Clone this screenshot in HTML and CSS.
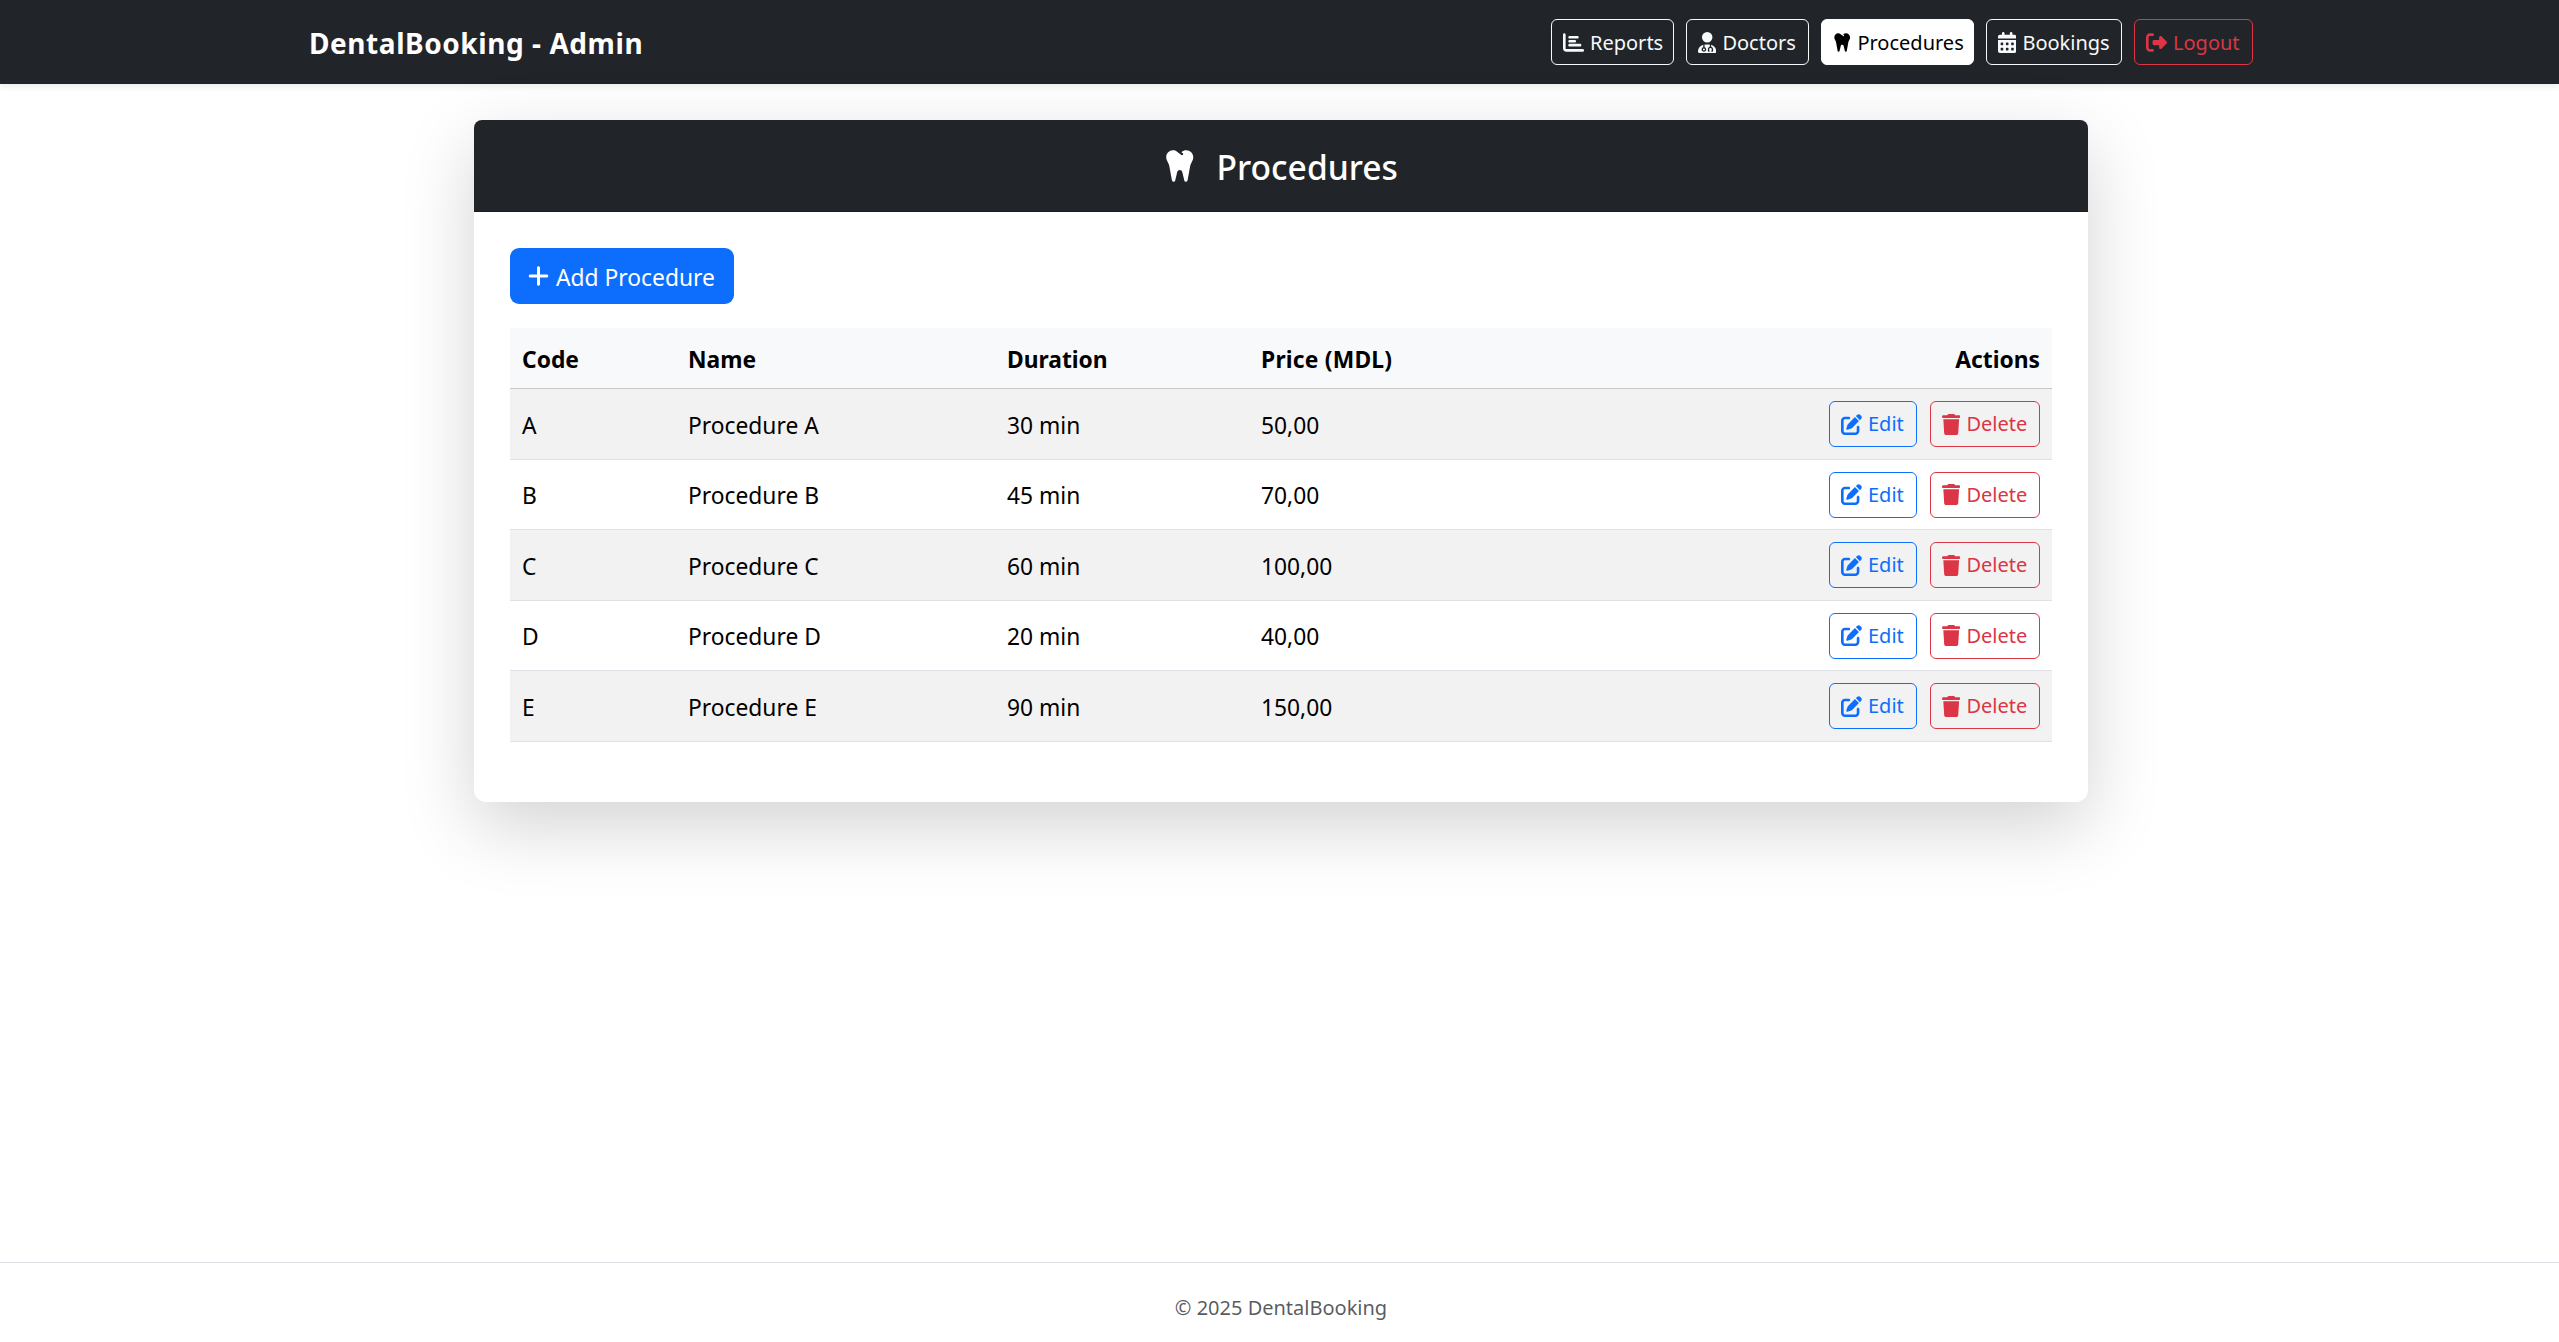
FILE: index.html
```html
<!DOCTYPE html>
<html lang="en">
<head>
<meta charset="utf-8">
<title>DentalBooking - Admin</title>
<link rel="stylesheet" href="styles.css">
</head>
<body>
<svg class="sprite" aria-hidden="true">
  <symbol id="chart" viewBox="0 0 512 512"><path d="M32 32c17.700 0 32 14.300 32 32V400c0 8.800 7.200 16 16 16H480c17.700 0 32 14.300 32 32s-14.300 32-32 32H80c-44.200 0-80-35.800-80-80V64C0 46.300 14.300 32 32 32zm96 96c0-17.700 14.300-32 32-32l192 0c17.700 0 32 14.300 32 32s-14.300 32-32 32l-192 0c-17.700 0-32-14.300-32-32zm32 64l128 0c17.700 0 32 14.300 32 32s-14.300 32-32 32l-128 0c-17.700 0-32-14.300-32-32s14.300-32 32-32zm0 96l256 0c17.700 0 32 14.300 32 32s-14.300 32-32 32l-256 0c-17.700 0-32-14.300-32-32s14.300-32 32-32z"/></symbol>
  <symbol id="doctor" viewBox="0 0 448 512"><path d="M224 256a128 128 0 1 0 0-256 128 128 0 1 0 0 256zm-96 55.200C54 332.900 0 401.300 0 482.300C0 498.700 13.300 512 29.700 512H418.300c16.400 0 29.700-13.300 29.700-29.700c0-81-54-149.400-128-171.100V362c27.600 7.100 48 32.200 48 62v40c0 8.800-7.200 16-16 16H336c-8.800 0-16-7.200-16-16s7.200-16 16-16V424c0-17.700-14.300-32-32-32s-32 14.300-32 32v24c8.800 0 16 7.200 16 16s-7.200 16-16 16H256c-8.800 0-16-7.200-16-16V424c0-29.800 20.400-54.900 48-62V304.900c-6-.6-12.100-.9-18.300-.9H178.300c-6.200 0-12.300 .3-18.300 .9v65.400c23.100 6.900 40 28.300 40 53.700c0 30.900-25.100 56-56 56s-56-25.100-56-56c0-25.400 16.900-46.800 40-53.700V311.200zM144 448a24 24 0 1 0 0-48 24 24 0 1 0 0 48z"/></symbol>
  <symbol id="tooth" viewBox="0 0 448 512"><path d="M186.100 52.100C169.300 39.100 148.700 32 127.500 32C74.700 32 32 74.700 32 127.500v6.200c0 15.800 3.700 31.300 10.700 45.500l23.500 47.100c4.500 8.900 7.600 18.400 9.400 28.200l36.700 205.800c2 11.200 11.600 19.400 22.900 19.800s21.400-7.400 24-18.400l28.900-121.300C192.200 323.700 207 312 224 312s31.800 11.700 35.800 28.300l28.900 121.300c2.600 11.100 12.700 18.800 24 18.400s21-8.600 22.900-19.800l36.700-205.800c1.800-9.800 4.900-19.300 9.400-28.200l23.500-47.100c7.100-14.100 10.700-29.700 10.700-45.500v-2.100c0-55-44.600-99.600-99.600-99.600c-24.100 0-47.400 8.800-65.600 24.600l-3.200 2.800 19.500 15.200c7 5.400 8.200 15.500 2.800 22.500s-15.500 8.200-22.500 2.800l-24.400-19-37-28.800z"/></symbol>
  <symbol id="calendar" viewBox="0 0 448 512"><path d="M128 0c17.700 0 32 14.300 32 32V64H288V32c0-17.700 14.300-32 32-32s32 14.300 32 32V64h48c26.500 0 48 21.500 48 48v48H0V112C0 85.500 21.500 64 48 64H96V32c0-17.700 14.300-32 32-32zM0 192H448V464c0 26.500-21.500 48-48 48H48c-26.500 0-48-21.500-48-48V192zm64 80v32c0 8.800 7.200 16 16 16h32c8.800 0 16-7.200 16-16V272c0-8.800-7.200-16-16-16H80c-8.800 0-16 7.200-16 16zm128 0v32c0 8.800 7.200 16 16 16h32c8.800 0 16-7.200 16-16V272c0-8.800-7.200-16-16-16H208c-8.800 0-16 7.200-16 16zm144-16c-8.800 0-16 7.200-16 16v32c0 8.800 7.200 16 16 16h32c8.800 0 16-7.200 16-16V272c0-8.800-7.200-16-16-16H336zM64 400v32c0 8.800 7.200 16 16 16h32c8.800 0 16-7.200 16-16V400c0-8.800-7.200-16-16-16H80c-8.800 0-16 7.200-16 16zm144-16c-8.800 0-16 7.200-16 16v32c0 8.800 7.200 16 16 16h32c8.800 0 16-7.200 16-16V400c0-8.800-7.200-16-16-16H208zm112 16v32c0 8.800 7.200 16 16 16h32c8.800 0 16-7.200 16-16V400c0-8.800-7.200-16-16-16H336c-8.800 0-16 7.200-16 16z"/></symbol>
  <symbol id="logout" viewBox="0 0 512 512"><path d="M377.900 105.900L500.700 228.700c7.200 7.200 11.300 17.100 11.300 27.300s-4.100 20.100-11.300 27.300L377.900 406.100c-6.400 6.400-15 9.900-24 9.900c-18.700 0-33.900-15.200-33.900-33.900l0-62.100-128 0c-17.700 0-32-14.300-32-32l0-64c0-17.700 14.300-32 32-32l128 0 0-62.100c0-18.700 15.200-33.900 33.900-33.900c9 0 17.600 3.600 24 9.900zM160 96L96 96c-17.700 0-32 14.300-32 32l0 256c0 17.700 14.300 32 32 32l64 0c17.700 0 32 14.300 32 32s-14.300 32-32 32l-64 0c-53 0-96-43-96-96L0 128C0 75 43 32 96 32l64 0c17.700 0 32 14.300 32 32s-14.300 32-32 32z"/></symbol>
  <symbol id="plus" viewBox="0 0 448 512"><path d="M256 80c0-17.700-14.300-32-32-32s-32 14.300-32 32V224H48c-17.700 0-32 14.300-32 32s14.300 32 32 32H192V432c0 17.700 14.300 32 32 32s32-14.300 32-32V288H400c17.700 0 32-14.300 32-32s-14.300-32-32-32H256V80z"/></symbol>
  <symbol id="edit" viewBox="0 0 512 512"><path d="M471.600 21.700c-21.900-21.900-57.300-21.900-79.200 0L362.300 51.700l97.900 97.900 30.100-30.100c21.900-21.900 21.900-57.300 0-79.200L471.600 21.700zm-299.200 220c-6.100 6.100-10.800 13.600-13.500 21.900l-29.600 88.800c-2.900 8.600-.6 18.100 5.800 24.600s15.900 8.700 24.600 5.800l88.800-29.600c8.200-2.700 15.700-7.400 21.900-13.500L437.700 172.300 339.700 74.300 172.400 241.700zM96 64C43 64 0 107 0 160V416c0 53 43 96 96 96H352c53 0 96-43 96-96V320c0-17.700-14.300-32-32-32s-32 14.300-32 32v96c0 17.700-14.300 32-32 32H96c-17.700 0-32-14.300-32-32V160c0-17.700 14.300-32 32-32h96c17.700 0 32-14.300 32-32s-14.300-32-32-32H96z"/></symbol>
  <symbol id="trash" viewBox="0 0 448 512"><path d="M135.200 17.700L128 32H32C14.300 32 0 46.300 0 64S14.300 96 32 96H416c17.700 0 32-14.300 32-32s-14.300-32-32-32H320l-7.200-14.300C307.400 6.800 296.300 0 284.200 0H163.800c-12.100 0-23.200 6.800-28.600 17.700zM416 128H32L53.200 467c1.600 25.300 22.600 45 47.900 45H346.900c25.300 0 46.300-19.700 47.900-45L416 128z"/></symbol>
</svg>
<header class="navbar">
  <div class="navbar-inner">
    <a class="brand">DentalBooking - Admin</a>
    <nav class="nav">
      <a class="btn light reports"><svg class="icon wide"><use href="#chart"/></svg><span>Reports</span></a>
      <a class="btn light doctors"><svg class="icon"><use href="#doctor"/></svg><span>Doctors</span></a>
      <a class="btn light active procedures"><svg class="icon"><use href="#tooth"/></svg><span>Procedures</span></a>
      <a class="btn light bookings"><svg class="icon"><use href="#calendar"/></svg><span>Bookings</span></a>
      <a class="btn danger logout"><svg class="icon wide"><use href="#logout"/></svg><span>Logout</span></a>
    </nav>
  </div>
</header>
<main class="main">
  <section class="card">
    <div class="card-header"><svg class="icon"><use href="#tooth"/></svg><h1 class="title">Procedures</h1></div>
    <div class="card-body">
      <a class="btn primary"><svg class="icon"><use href="#plus"/></svg><span>Add Procedure</span></a>
      <table class="table">
        <colgroup><col class="col-code"><col class="col-name"><col class="col-duration"><col class="col-price"><col></colgroup>
        <thead><tr><th>Code</th><th>Name</th><th>Duration</th><th class="price">Price (MDL)</th><th class="end">Actions</th></tr></thead>
        <tbody>
          <tr><td>A</td><td>Procedure A</td><td>30 min</td><td>50,00</td><td class="cell-actions"><div class="actions"><a class="btn edit"><svg class="icon wide"><use href="#edit"/></svg><span>Edit</span></a><a class="btn danger delete"><svg class="icon"><use href="#trash"/></svg><span>Delete</span></a></div></td></tr>
          <tr><td>B</td><td>Procedure B</td><td>45 min</td><td>70,00</td><td class="cell-actions"><div class="actions"><a class="btn edit"><svg class="icon wide"><use href="#edit"/></svg><span>Edit</span></a><a class="btn danger delete"><svg class="icon"><use href="#trash"/></svg><span>Delete</span></a></div></td></tr>
          <tr><td>C</td><td>Procedure C</td><td>60 min</td><td>100,00</td><td class="cell-actions"><div class="actions"><a class="btn edit"><svg class="icon wide"><use href="#edit"/></svg><span>Edit</span></a><a class="btn danger delete"><svg class="icon"><use href="#trash"/></svg><span>Delete</span></a></div></td></tr>
          <tr><td>D</td><td>Procedure D</td><td>20 min</td><td>40,00</td><td class="cell-actions"><div class="actions"><a class="btn edit"><svg class="icon wide"><use href="#edit"/></svg><span>Edit</span></a><a class="btn danger delete"><svg class="icon"><use href="#trash"/></svg><span>Delete</span></a></div></td></tr>
          <tr><td>E</td><td>Procedure E</td><td>90 min</td><td>150,00</td><td class="cell-actions"><div class="actions"><a class="btn edit"><svg class="icon wide"><use href="#edit"/></svg><span>Edit</span></a><a class="btn danger delete"><svg class="icon"><use href="#trash"/></svg><span>Delete</span></a></div></td></tr>
        </tbody>
      </table>
    </div>
  </section>
</main>
<footer class="footer">© 2025 DentalBooking</footer>
</body>
</html>
```
FILE: styles.css
```css
* { box-sizing: border-box; }

body {
  margin: 0;
  min-height: 100vh;
  display: flex;
  flex-direction: column;
  background: #fff;
  color: #212529;
  font-family: "Segoe UI", "Noto Sans", "Open Sans", sans-serif;
  font-size: 22.8px;
  line-height: 36px;
}

.sprite { display: none; }

.navbar {
  height: 84px;
  padding-left: 3px;
  background: #212529;
  box-shadow: 0 3px 6px rgba(0, 0, 0, .075);
}

.navbar-inner {
  width: 1944px;
  height: 100%;
  margin: 0 auto;
  display: flex;
  align-items: center;
  justify-content: space-between;
}

.brand {
  padding-top: 2px;
  color: #fff;
  font-size: 28px;
  font-weight: 700;
  letter-spacing: .56px;
  white-space: nowrap;
}

.nav { display: flex; gap: 12px; }

.btn {
  display: inline-flex;
  align-items: center;
  gap: 6px;
  height: 46px;
  padding: 0 11px;
  border: 1px solid currentColor;
  border-radius: 6px;
  font-size: 20px;
  line-height: 30px;
  white-space: nowrap;
}
.nav .btn span { padding-top: 1px; }

.icon {
  flex: none;
  width: 18.4px;
  height: 21px;
  fill: currentColor;
}
.icon.wide { width: 21px; }

.light { color: #f8f9fa; }
.light.active { background: #fff; border-color: #fff; color: #000; }
.danger { color: #dc3545; }
.edit { color: #0d6efd; width: 88px; }
.delete { width: 110px; }
.reports, .doctors { width: 123px; }
.procedures { width: 153px; }
.bookings { width: 136px; }
.logout { width: 119px; }

.main { flex: 1; padding: 36px 0 0 3px; }

.card {
  width: 1614px;
  margin: 0 auto;
  background: #fff;
  border-radius: 12px;
  box-shadow: 0 24px 72px rgba(0, 0, 0, .175);
}

.card-header {
  height: 92px;
  display: flex;
  align-items: center;
  justify-content: center;
  gap: 21px;
  background: #212529;
  border-bottom: 1px solid #1b1e21;
  border-radius: 8px 8px 0 0;
  color: #fff;
}
.card-header .icon { width: 31.5px; height: 36px; }

.title {
  margin: 0;
  padding-top: 3px;
  font-size: 33.6px;
  font-weight: 500;
  line-height: 43px;
}

.card-body { padding: 36px 36px 60px; }

.primary {
  height: 56px;
  width: 224px;
  padding: 0 18px;
  gap: 7px;
  background: #0d6efd;
  border: 0;
  border-radius: 9px;
  color: #fff;
  font-size: 22.8px;
  vertical-align: top;
}
.primary .icon { width: 21px; height: 24px; }
.primary span { padding-top: 3px; }

.table {
  width: 100%;
  margin-top: 24px;
  table-layout: fixed;
  border-collapse: separate;
  border-spacing: 0;
  color: #000;
}
.col-code { width: 166px; }
.col-name { width: 319px; }
.col-duration { width: 254px; }
.col-price { width: 254px; }

th, td {
  padding: 3px 12px 0;
  height: 70px;
  border-bottom: 1px solid #dee2e6;
  text-align: left;
  vertical-align: middle;
}
th {
  height: 61px;
  background: #f8f9fa;
  border-bottom-color: #c6c7c8;
  font-weight: 700;
}
tbody tr:nth-child(odd) td { height: 71px; background: #f2f2f2; }
.price { letter-spacing: .22px; }
.end { text-align: right; }
.cell-actions { padding-top: 0; }
.actions { display: flex; justify-content: flex-end; gap: 13px; }

.footer {
  height: 80px;
  padding: 27px 0 0 3px;
  border-top: 1px solid #dee2e6;
  color: rgba(33, 37, 41, .75);
  font-size: 20px;
  text-align: center;
}
```
